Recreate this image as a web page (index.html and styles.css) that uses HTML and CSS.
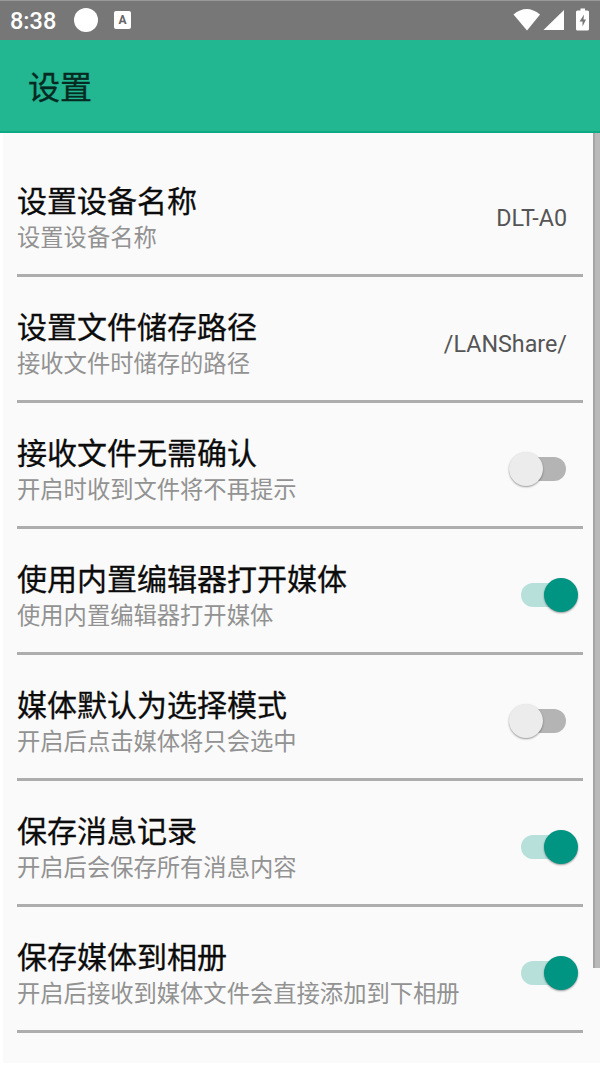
FILE: index.html
```html
<!DOCTYPE html>
<html lang="zh-CN">
<head>
<meta charset="utf-8">
<title>设置</title>
<link rel="stylesheet" href="styles.css">
</head>
<body>
<div class="status-bar">
  <span class="clock">8:38</span>
  <span class="dot"></span>
  <span class="badge">A</span>
  <svg class="signals" width="80" height="24" viewBox="0 0 80 24" fill="#fff">
    <path d="M0.500 6.500Q13.500 -4.500 27 6.500L14 22.500Z"/>
    <path d="M51 2V22H30.500Z"/>
    <path d="M67.500 0.500h4.500v2h2.500q1.500 0 1.500 1.500v17q0 1.500-1.500 1.500h-10q-1.500 0-1.500-1.500v-17q0-1.500 1.500-1.500h3z"/>
    <path d="M71 6.500L66.500 13.500H69.500V18.500L73 11.500H70.500Z" fill="#777"/>
  </svg>
</div>
<header class="app-bar"><h1>设置</h1></header>
<main class="settings">
  <section class="row"><div class="text"><h2>设置设备名称</h2><p>设置设备名称</p></div><span class="value">DLT-A0</span></section>
  <section class="row"><div class="text"><h2>设置文件储存路径</h2><p>接收文件时储存的路径</p></div><span class="value">/LANShare/</span></section>
  <section class="row"><div class="text"><h2>接收文件无需确认</h2><p>开启时收到文件将不再提示</p></div><span class="switch"></span></section>
  <section class="row"><div class="text"><h2>使用内置编辑器打开媒体</h2><p>使用内置编辑器打开媒体</p></div><span class="switch on"></span></section>
  <section class="row"><div class="text"><h2>媒体默认为选择模式</h2><p>开启后点击媒体将只会选中</p></div><span class="switch"></span></section>
  <section class="row"><div class="text"><h2>保存消息记录</h2><p>开启后会保存所有消息内容</p></div><span class="switch on"></span></section>
  <section class="row"><div class="text"><h2>保存媒体到相册</h2><p>开启后接收到媒体文件会直接添加到下相册</p></div><span class="switch on"></span></section>
  <div class="scrollbar"></div>
</main>
</body>
</html>
```
FILE: styles.css
```css
* { box-sizing: border-box; }
body {
  margin: 0;
  width: 600px;
  height: 1066px;
  overflow: hidden;
  background: #fff;
  font-family: Roboto, "Noto Sans CJK SC", sans-serif;
}
h1, h2, p { margin: 0; font-weight: 400; white-space: nowrap; }
.status-bar {
  height: 40px;
  display: flex;
  align-items: center;
  padding: 0 7px 0 10px;
  background: #777;
  box-shadow: inset 0 1px #999;
  color: #fff;
}
.clock { width: 64px; font-size: 23.5px; font-weight: 500; line-height: 38px; padding-top: 2px; }
.dot { width: 24px; height: 24px; border-radius: 50%; background: #fff; }
.badge {
  width: 17px;
  height: 18px;
  margin-left: 16px;
  border-radius: 2px;
  background: #fff;
  color: #666;
  font-size: 12px;
  font-weight: 700;
  line-height: 18px;
  text-align: center;
}
.signals { margin-left: auto; }
.app-bar {
  height: 93px;
  padding: 3px 28px 0;
  background: #22b691;
  border-bottom: 2px solid #0caa82;
}
.app-bar h1 { font-size: 32px; line-height: 91px; height: 88px; color: #062a21; -webkit-text-stroke: 0.3px #062a21; }
.settings {
  position: relative;
  height: 930px;
  margin-left: 3px;
  padding: 18px 17px 0 14px;
  background: #fafafa;
}
.row {
  height: 126px;
  display: flex;
  align-items: center;
  justify-content: space-between;
  padding-top: 9px;
  border-bottom: 3px solid #adadad;
}
.text { padding-top: 5px; }
.text h2 { font-size: 30px; line-height: 36px; color: #0c0c0c; -webkit-text-stroke: 0.3px #0c0c0c; }
.text p { font-size: 23.3px; line-height: 36px; color: #929292; }
.value { margin-right: 16px; padding-top: 1px; font-size: 23.3px; color: #555; }
.switch {
  position: relative;
  width: 45px;
  height: 24px;
  margin-right: 17px;
  border-radius: 12px;
  background: #b4b4b4;
}
.switch::before {
  content: "";
  position: absolute;
  left: -12px;
  top: -5px;
  width: 34px;
  height: 34px;
  border-radius: 50%;
  background: #ececec;
  box-shadow: 0 1px 2px rgba(0, 0, 0, 0.4);
}
.switch.on { background: #b7e0db; }
.switch.on::before { left: 23px; background: #009483; }
.scrollbar {
  position: absolute;
  top: 0;
  right: 0;
  width: 7px;
  height: 835px;
  background: #b9b9b9;
  border-left: 2px solid #a5a5a5;
}
```
